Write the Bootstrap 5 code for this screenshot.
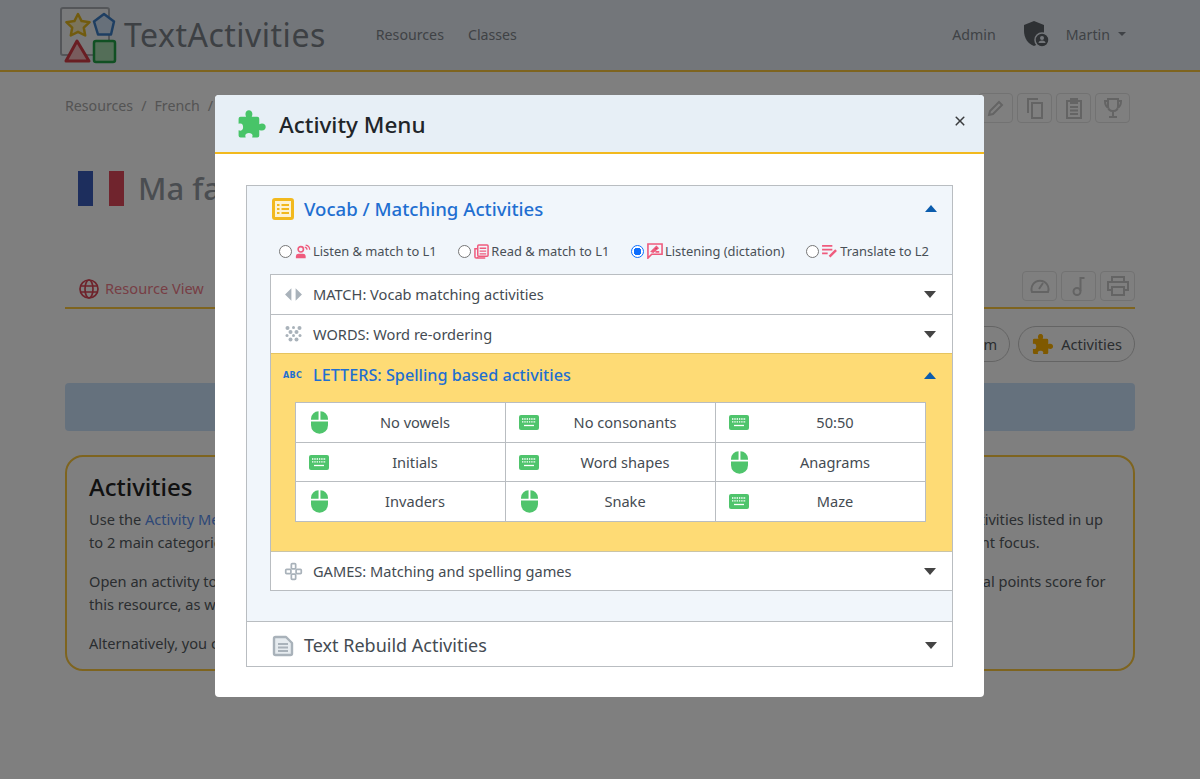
<!DOCTYPE html>
<html lang="en">
<head>
  <meta charset="UTF-8" />
  <meta name="viewport" content="width=device-width, initial-scale=1.0"/>
  <title>TextActivities</title>
  <link href="https://cdn.jsdelivr.net/npm/bootstrap@5.3.3/dist/css/bootstrap.min.css" rel="stylesheet">
  <style>
    body {
      font-family: "Noto Sans", "Open Sans", sans-serif;
      font-size: 14.6px;
      line-height: 23px;
      color: #555b61;
      overflow: hidden;
    }
    svg { display: block; flex: none; }

    /* page behind the modal */
    .top-bar {
      height: 72px;
      padding: 0 74px 2px 60px;
      background: #e7edf4;
      border-bottom: 2px solid #fcc93f;
    }
    .brand-logo { width: 56px; height: 56px; margin-top: 8px; margin-right: 8px; }
    .brand-name { font-size: 32px; letter-spacing: .5px; color: #7a8188; margin-right: 50px; }
    .top-link { color: #7f858c; text-decoration: none; font-size: 14.2px; }
    .top-link.dropdown-toggle::after { margin-left: 8px; }
    .shield-icon { margin: 0 16px 0 26px; }
    .page-wrap { padding: 0 65px; }
    .crumbs { height: 66px; padding-top: 22px; }
    .crumbs .breadcrumb { font-size: 14.2px; }
    .crumbs .breadcrumb-item, .crumbs .breadcrumb-item::before { color: #a8a8a8; }
    .tool-btn {
      width: 35px; height: 30px;
      border: 1px solid #e4e4e4;
      border-radius: 4px;
      color: #c8c8c8;
    }
    .tools-top { margin: -1px 5px 0 0; }
    .tools-tab { margin-top: -6px; }
    .title-row { height: 139px; padding: 33px 0 0 13px; }
    .flag-blue { width: 15px; background: #3a5cba; }
    .flag-white { width: 16px; background: #fff; }
    .flag-red { width: 15px; background: #e0485a; }
    .flag-box { height: 35px; margin-right: 14px; }
    .page-title { font-size: 31px; font-weight: 500; margin: 0; color: #959ba2; line-height: 35px; }
    .tab-bar { height: 32px; border-bottom: 2px solid #fcc93f; }
    .tab-link { color: #ee7c8a; padding-left: 14px; gap: 6px; }
    .tab-link svg { color: #dc4656; }
    .pill-row { height: 74px; padding-top: 17px; }
    .pill-btn {
      height: 36px;
      border: 1px solid #c8c8c8;
      border-radius: 18px;
      padding: 0 12px;
      color: #555b61;
      gap: 7px;
    }
    .note-bar { height: 48px; background: #cbe3fb; border-radius: 4px; margin-bottom: 24px; }
    .info-box { height: 216px; border: 2px solid #fcc93f; border-radius: 18px; padding: 14px 22px; }
    .info-box h3 { font-size: 24px; font-weight: 500; line-height: 32px; margin: 0 0 5px; color: #222; }
    .info-box p { margin-bottom: 16px; }
    .info-box a { color: #5b8fee; text-decoration: none; }

    /* modal */
    .menu-dialog { max-width: 769px; width: 769px; margin: 95px 0 0 215px; }
    .menu-dialog .modal-content { border: 0; border-radius: 4px; }
    .menu-head {
      height: 59px;
      padding: 2px 18px 0 21px;
      background: #e7eff6;
      border-bottom: 2px solid #f2b91e;
      border-radius: 4px 4px 0 0;
    }
    .menu-head .modal-title { font-size: 22.5px; line-height: 30px; color: #212529; margin-left: 12px; }
    .menu-head .btn-close { width: 12px; height: 12px; padding: 0; background-size: 12px; margin: 0 0 8px auto; opacity: .75; }
    .menu-body { padding: 31px 31px 30px; }

    .outer-acc { border: 1px solid #b9bdc1; }
    .acc-open { background: #f1f6fb; padding-bottom: 30px; }
    .outer-row { height: 47px; padding: 0 15px 0 25px; gap: 10px; font-size: 18px; }
    .outer-row.text-active { font-size: 18.6px; font-weight: 500; padding-bottom: 2px; }
    .outer-shut { height: 45px; padding-top: 3px; border-top: 1px solid #b9bdc1; background: #fff; color: #444b52; }
    .text-active { color: #1f6fd1; }
    .caret-up, .caret-down {
      width: 0; height: 0; margin-left: auto;
      border-left: 6px solid transparent;
      border-right: 6px solid transparent;
    }
    .caret-up { border-bottom: 7px solid #0b5cad; }
    .caret-down { border-top: 7px solid #444; }

    .mode-row { height: 41px; padding: 0 23px 5px 32px; font-size: 12.9px; color: #495057; }
    .mode-row .form-check-input {
      width: 13px; height: 13px; margin: 0 3px 0 0;
      border-color: #767676; float: none; flex: none;
    }
    .mode-row .form-check-input:checked {
      background-color: #fff;
      background-image: radial-gradient(circle, #0d6efd 0 3.6px, #fff 4px);
      border-color: #0d6efd;
    }
    .mode-row svg { margin-right: 2px; }

    .inner-acc { margin-left: 23px; background: #fff; border: 1px solid #b9bdc1; border-right: 0; color: #444b52; }
    .inner-row { height: 39px; padding: 0 16px 0 13px; gap: 10px; }
    .inner-row + .inner-row, .letters-panel + .inner-row { border-top: 1px solid #b9bdc1; }
    .letters-panel { background: #fedb75; border-top: 1px solid #e6c45f; height: 198px; }
    .letters-panel + .inner-row { border-top-color: #c9c4a8; }
    .letters-head { height: 43px; padding: 0 16px 0 12px; gap: 8px; font-size: 16.2px; font-weight: 500; }
    .abc-tag { font: bold 8px/1 "DejaVu Sans", sans-serif; letter-spacing: .4px; color: #1f6fd1; width: 22px; }
    .spell-table { width: 631px; margin: 5px 0 0 24px; background: #fff; table-layout: fixed; }
    .spell-table td { height: 39.7px; border: 1px solid #b9bdc1; padding: 0 9px 0 8px; vertical-align: middle; color: #444b52; }
    .cell-icon { width: 30px; }
    .ic-green { color: #4fc46c; }
    .ic-pink { color: #ef5b7d; }
    .ic-grey { color: #a9b2ba; }
    .ic-gold { color: #f2b91e; }
    .ic-amber { color: #ffb300; }
    .ic-puzzle-head { color: #48c468; }

    .modal-backdrop.show { opacity: .5; }
  </style>
</head>
<body>

  <!-- shared icons -->
  <svg width="0" height="0" class="position-absolute">
    <symbol id="i-puzzle" viewBox="0 0 24 24"><path fill="currentColor" d="M2 7.500Q2 6 3.500 6H7.800C6.500 3 8 1 10 1s3.500 2 2.200 5h4.300Q18 6 18 7.500v4.300c3-1.300 5 .2 5 2.200s-2 3.500-5 2.200v4.300q0 1.500-1.500 1.500h-4c1-2.500-.5-3.500-2.500-3.500s-3.500 1-2.500 3.500h-4Q2 22 2 20.500v-4c2.500 1 3.500-.5 3.500-2.500S4.500 10.500 2 11.500z"/></symbol>
    <symbol id="i-mouse" viewBox="0 0 18 24"><path fill="currentColor" d="M0 9V8a8 8 0 0 1 8-8v9zM10 0a8 8 0 0 1 8 8v1h-8zM0 11h18v4a9 9 0 0 1-18 0z"/></symbol>
    <symbol id="i-keys" viewBox="0 0 20 15"><rect width="20" height="15" rx="2" fill="currentColor"/><path stroke="#fff" stroke-width="1.300" stroke-dasharray="1.400 .9" d="M3 4h14M3 6.800h14"/><path stroke="#fff" stroke-width="1.300" d="M5 10.500h10"/></symbol>
    <symbol id="i-list" viewBox="0 0 22 22"><rect x="1.500" y="1.500" width="19" height="19" rx="1.500" fill="#fdf3d4" stroke="currentColor" stroke-width="3"/><path stroke="currentColor" stroke-width="2" d="M5 7h2.500M9.500 7H17M5 11h2.500M9.500 11H17M5 15h2.500M9.500 15H17"/></symbol>
    <symbol id="i-file" viewBox="0 0 22 22"><path fill="#e6ebef" stroke="currentColor" stroke-width="2.400" stroke-linejoin="round" d="M2 3.500Q2 2 3.500 2H14l6 6v10.500q0 1.500-1.500 1.500h-15Q2 20 2 18.500z"/><path stroke="currentColor" stroke-width="2" d="M6 9h10M6 12.500h10M6 16h10"/></symbol>
    <symbol id="i-arrows" viewBox="0 0 18 14"><path fill="currentColor" d="M7 1v12L1 7zM11 1v12l6-6z"/></symbol>
    <symbol id="i-dots" viewBox="0 0 18 18"><g fill="currentColor"><circle cx="3" cy="3" r="2"/><circle cx="9" cy="2.500" r="1.500"/><circle cx="15" cy="3" r="2"/><circle cx="6" cy="7" r="2"/><circle cx="12" cy="7" r="2"/><circle cx="2.500" cy="10.500" r="1.500"/><circle cx="15.500" cy="10.500" r="1.500"/><circle cx="6" cy="14.500" r="2"/><circle cx="12" cy="14.500" r="2"/><circle cx="9" cy="10.500" r="1.500"/></g></symbol>
    <symbol id="i-pad" viewBox="0 0 22 22"><g fill="none" stroke="currentColor" stroke-width="2"><rect x="8.500" y="2" width="5" height="6" rx="1"/><rect x="8.500" y="14" width="5" height="6" rx="1"/><rect x="2" y="8.500" width="6" height="5" rx="1"/><rect x="14" y="8.500" width="6" height="5" rx="1"/></g></symbol>
    <symbol id="i-listen" viewBox="0 0 18 16"><circle cx="6.500" cy="5.500" r="3" fill="none" stroke="currentColor" stroke-width="1.800"/><path fill="currentColor" d="M1 15.500v-2q0-3 3-3h5q3 0 3 3v2z"/><path fill="none" stroke="currentColor" stroke-width="1.400" d="M11 3q2.500.5 2.500 3M12 .8q4.500.7 4.500 5.200"/></symbol>
    <symbol id="i-paper" viewBox="0 0 16 16"><rect x="4" y="1" width="11" height="12" rx="1" fill="none" stroke="currentColor" stroke-width="1.600"/><path fill="none" stroke="currentColor" stroke-width="1.600" d="M4 13.500q0 1.500-1.500 1.500T1 13.500V5h3M12 15H2.500"/><path stroke="currentColor" stroke-width="1.400" d="M6 4.500h7M6 7.500h7M6 10.500h7"/></symbol>
    <symbol id="i-chat" viewBox="0 0 17 17"><path fill="none" stroke="currentColor" stroke-width="1.700" d="M1 1h15v11H5l-4 4z"/><path stroke="currentColor" stroke-width="1.800" d="M5 9l5-5 1.500 1.500-5 4zM9 9.500h4"/></symbol>
    <symbol id="i-write" viewBox="0 0 17 15"><path stroke="currentColor" stroke-width="1.800" d="M0 2h11M0 6h11M0 10h6"/><path stroke="currentColor" stroke-width="2.600" d="M8 13.500l7-7"/></symbol>
  </svg>

  <nav class="top-bar d-flex align-items-start">
    <svg class="brand-logo overflow-visible" viewBox="0 0 56 56">
      <rect x="1" y="0" width="48" height="47" fill="#f2f4f6" stroke="#a8adb2" stroke-width="2" rx="2"/>
      <path d="M18 6l3.600 7.100 8 1.100-5.800 5.500 1.400 7.800L18 23.800l-7.200 3.700 1.400-7.800-5.800-5.500 8-1.100z" fill="#f6e9b8" stroke="#e3b71f" stroke-width="2.500" stroke-linejoin="round"/>
      <path d="M44 6l10 7.500-3 13h-13l-4-13z" fill="#cfe0f4" stroke="#3c7dc4" stroke-width="2.500" stroke-linejoin="round"/>
      <path d="M17 33l12 20H6z" fill="#f2b8bb" stroke="#d23c46" stroke-width="3" stroke-linejoin="round"/>
      <rect x="34" y="33" width="21" height="21" rx="2" fill="#a9dcb0" stroke="#23a046" stroke-width="2.500"/>
    </svg>
    <span class="brand-name align-self-center">TextActivities</span>
    <a class="top-link align-self-center me-4" href="#">Resources</a>
    <a class="top-link align-self-center" href="#">Classes</a>
    <a class="top-link align-self-center ms-auto" href="#">Admin</a>
    <svg class="shield-icon align-self-center" width="28" height="28" viewBox="0 0 28 28">
      <path fill="#5c6268" d="M12 1l10 4v6c0 7-4 13-10 15C6 24 2 18 2 11V5z"/>
      <circle cx="20" cy="20" r="7" fill="#5c6268" stroke="#e7edf4" stroke-width="1.500"/>
      <circle cx="20" cy="18" r="2" fill="#e7edf4"/><path fill="#e7edf4" d="M16.500 23q0-2.500 3.500-2.500t3.500 2.500z"/>
    </svg>
    <a class="top-link dropdown-toggle align-self-center" href="#">Martin</a>
  </nav>

  <main class="page-wrap">
    <div class="crumbs d-flex justify-content-between">
      <ol class="breadcrumb mb-0">
        <li class="breadcrumb-item">Resources</li>
        <li class="breadcrumb-item">French</li>
        <li class="breadcrumb-item">Family</li>
      </ol>
      <div class="tools-top d-flex gap-1">
        <span class="tool-btn d-flex align-items-center justify-content-center"><svg width="20" height="20" viewBox="0 0 20 20"><path fill="none" stroke="currentColor" stroke-width="2" d="M3 17l1-4L13 4l3 3-9 9z"/></svg></span>
        <span class="tool-btn d-flex align-items-center justify-content-center"><svg width="20" height="22" viewBox="0 0 20 22"><path fill="none" stroke="currentColor" stroke-width="2" d="M13 2H3v14M7 6h10v15H7z"/></svg></span>
        <span class="tool-btn d-flex align-items-center justify-content-center"><svg width="18" height="22" viewBox="0 0 18 22"><path fill="none" stroke="currentColor" stroke-width="2" d="M2 4h14v17H2zM6 2h6v4H6zM5 10h8M5 13.500h8M5 17h8"/></svg></span>
        <span class="tool-btn d-flex align-items-center justify-content-center"><svg width="20" height="22" viewBox="0 0 20 22"><path fill="none" stroke="currentColor" stroke-width="2" d="M5 2h10v7q0 5-5 5t-5-5zM5 4H2q0 6 4 7M15 4h3q0 6-4 7M10 14v5M6 20h8"/></svg></span>
      </div>
    </div>

    <div class="title-row d-flex align-items-start">
      <div class="flag-box d-flex">
        <span class="flag-blue"></span><span class="flag-white"></span><span class="flag-red"></span>
      </div>
      <h1 class="page-title">Ma famille</h1>
    </div>

    <div class="tab-bar d-flex align-items-start">
      <a class="tab-link d-flex align-items-center text-decoration-none" href="#">
        <svg width="20" height="20" viewBox="0 0 20 20"><g fill="none" stroke="currentColor" stroke-width="1.700"><circle cx="10" cy="10" r="9"/><ellipse cx="10" cy="10" rx="4" ry="9"/><path d="M1.500 7h17M1.500 13h17"/></g></svg>
        Resource View
      </a>
      <div class="tools-tab d-flex gap-1 ms-auto">
        <span class="tool-btn d-flex align-items-center justify-content-center"><svg width="20" height="18" viewBox="0 0 20 18"><path fill="none" stroke="currentColor" stroke-width="2" d="M2 15a8.500 8.500 0 1 1 16 0zM9 12l4-6"/></svg></span>
        <span class="tool-btn d-flex align-items-center justify-content-center"><svg width="14" height="20" viewBox="0 0 14 20"><circle cx="5" cy="15.500" r="3.500" fill="none" stroke="currentColor" stroke-width="2"/><path fill="none" stroke="currentColor" stroke-width="2" d="M8.500 15V2h4"/></svg></span>
        <span class="tool-btn d-flex align-items-center justify-content-center"><svg width="22" height="20" viewBox="0 0 22 20"><path fill="none" stroke="currentColor" stroke-width="2" d="M5 6V1h12v5M5 14H1V6h20v8h-4M5 11h12v8H5z"/></svg></span>
      </div>
    </div>

    <div class="pill-row d-flex justify-content-end gap-2">
      <span class="pill-btn d-flex align-items-center">Classroom</span>
      <span class="pill-btn d-flex align-items-center">
        <svg class="ic-amber" width="23" height="23"><use href="#i-puzzle"/></svg>Activities
      </span>
    </div>

    <div class="note-bar"></div>

    <section class="info-box">
      <h3>Activities</h3>
      <p>Use the <a href="#">Activity Menu</a> (at the top right corner of this page) to open up any one of the many different types of language learning activities listed in up to 2 main categories: Vocab / Matching and Text Rebuild, with a range of activity types in each one, and each having its own different focus.</p>
      <p>Open an activity to begin, and when it has been completed you will see all your results, which then go towards building up your total points score for this resource, as well as your place on the leaderboard.</p>
      <p class="mb-0">Alternatively, you can browse through every activity from the list.</p>
    </section>
  </main>

  <div class="modal-backdrop show"></div>

  <div class="modal d-block" tabindex="-1">
    <div class="modal-dialog menu-dialog">
      <div class="modal-content">
        <div class="modal-header menu-head">
          <svg class="ic-puzzle-head" width="31" height="31"><use href="#i-puzzle"/></svg>
          <h5 class="modal-title">Activity Menu</h5>
          <button type="button" class="btn-close" aria-label="Close"></button>
        </div>
        <div class="modal-body menu-body">
          <div class="outer-acc">
            <div class="acc-open">
              <div class="outer-row d-flex align-items-center text-active">
                <svg class="ic-gold" width="22" height="22"><use href="#i-list"/></svg>
                <span>Vocab / Matching Activities</span>
                <span class="caret-up"></span>
              </div>
              <div class="mode-row d-flex align-items-center justify-content-between">
                <label class="d-flex align-items-center"><input class="form-check-input" type="radio" name="mode"><svg class="ic-pink" width="16" height="15"><use href="#i-listen"/></svg>Listen &amp; match to L1</label>
                <label class="d-flex align-items-center"><input class="form-check-input" type="radio" name="mode"><svg class="ic-pink" width="15" height="15"><use href="#i-paper"/></svg>Read &amp; match to L1</label>
                <label class="d-flex align-items-center"><input class="form-check-input" type="radio" name="mode" checked><svg class="ic-pink" width="16" height="16"><use href="#i-chat"/></svg>Listening (dictation)</label>
                <label class="d-flex align-items-center"><input class="form-check-input" type="radio" name="mode"><svg class="ic-pink" width="16" height="14"><use href="#i-write"/></svg>Translate to L2</label>
              </div>

              <div class="inner-acc">
                <div class="inner-row d-flex align-items-center">
                  <svg class="ic-grey" width="19" height="15"><use href="#i-arrows"/></svg>
                  <span>MATCH: Vocab matching activities</span>
                  <span class="caret-down"></span>
                </div>
                <div class="inner-row d-flex align-items-center">
                  <svg class="ic-grey" width="19" height="18"><use href="#i-dots"/></svg>
                  <span>WORDS: Word re-ordering</span>
                  <span class="caret-down"></span>
                </div>
                <div class="letters-panel">
                  <div class="letters-head d-flex align-items-center text-active">
                    <span class="abc-tag">ABC</span>
                    <span>LETTERS: Spelling based activities</span>
                    <span class="caret-up"></span>
                  </div>
                  <table class="spell-table">
                    <tr>
                      <td><div class="d-flex align-items-center"><span class="cell-icon d-flex justify-content-center"><svg class="ic-green" width="17" height="23"><use href="#i-mouse"/></svg></span><span class="flex-grow-1 text-center">No vowels</span></div></td>
                      <td><div class="d-flex align-items-center"><span class="cell-icon d-flex justify-content-center"><svg class="ic-green" width="20" height="15"><use href="#i-keys"/></svg></span><span class="flex-grow-1 text-center">No consonants</span></div></td>
                      <td><div class="d-flex align-items-center"><span class="cell-icon d-flex justify-content-center"><svg class="ic-green" width="20" height="15"><use href="#i-keys"/></svg></span><span class="flex-grow-1 text-center">50:50</span></div></td>
                    </tr>
                    <tr>
                      <td><div class="d-flex align-items-center"><span class="cell-icon d-flex justify-content-center"><svg class="ic-green" width="20" height="15"><use href="#i-keys"/></svg></span><span class="flex-grow-1 text-center">Initials</span></div></td>
                      <td><div class="d-flex align-items-center"><span class="cell-icon d-flex justify-content-center"><svg class="ic-green" width="20" height="15"><use href="#i-keys"/></svg></span><span class="flex-grow-1 text-center">Word shapes</span></div></td>
                      <td><div class="d-flex align-items-center"><span class="cell-icon d-flex justify-content-center"><svg class="ic-green" width="17" height="23"><use href="#i-mouse"/></svg></span><span class="flex-grow-1 text-center">Anagrams</span></div></td>
                    </tr>
                    <tr>
                      <td><div class="d-flex align-items-center"><span class="cell-icon d-flex justify-content-center"><svg class="ic-green" width="17" height="23"><use href="#i-mouse"/></svg></span><span class="flex-grow-1 text-center">Invaders</span></div></td>
                      <td><div class="d-flex align-items-center"><span class="cell-icon d-flex justify-content-center"><svg class="ic-green" width="17" height="23"><use href="#i-mouse"/></svg></span><span class="flex-grow-1 text-center">Snake</span></div></td>
                      <td><div class="d-flex align-items-center"><span class="cell-icon d-flex justify-content-center"><svg class="ic-green" width="20" height="15"><use href="#i-keys"/></svg></span><span class="flex-grow-1 text-center">Maze</span></div></td>
                    </tr>
                  </table>
                </div>
                <div class="inner-row d-flex align-items-center">
                  <svg class="ic-grey" width="19" height="19"><use href="#i-pad"/></svg>
                  <span>GAMES: Matching and spelling games</span>
                  <span class="caret-down"></span>
                </div>
              </div>
            </div>
            <div class="outer-row outer-shut d-flex align-items-center">
              <svg class="ic-grey" width="22" height="22"><use href="#i-file"/></svg>
              <span>Text Rebuild Activities</span>
              <span class="caret-down"></span>
            </div>
          </div>
        </div>
      </div>
    </div>
  </div>

  <script src="https://cdn.jsdelivr.net/npm/bootstrap@5.3.3/dist/js/bootstrap.bundle.min.js"></script>
</body>
</html>
